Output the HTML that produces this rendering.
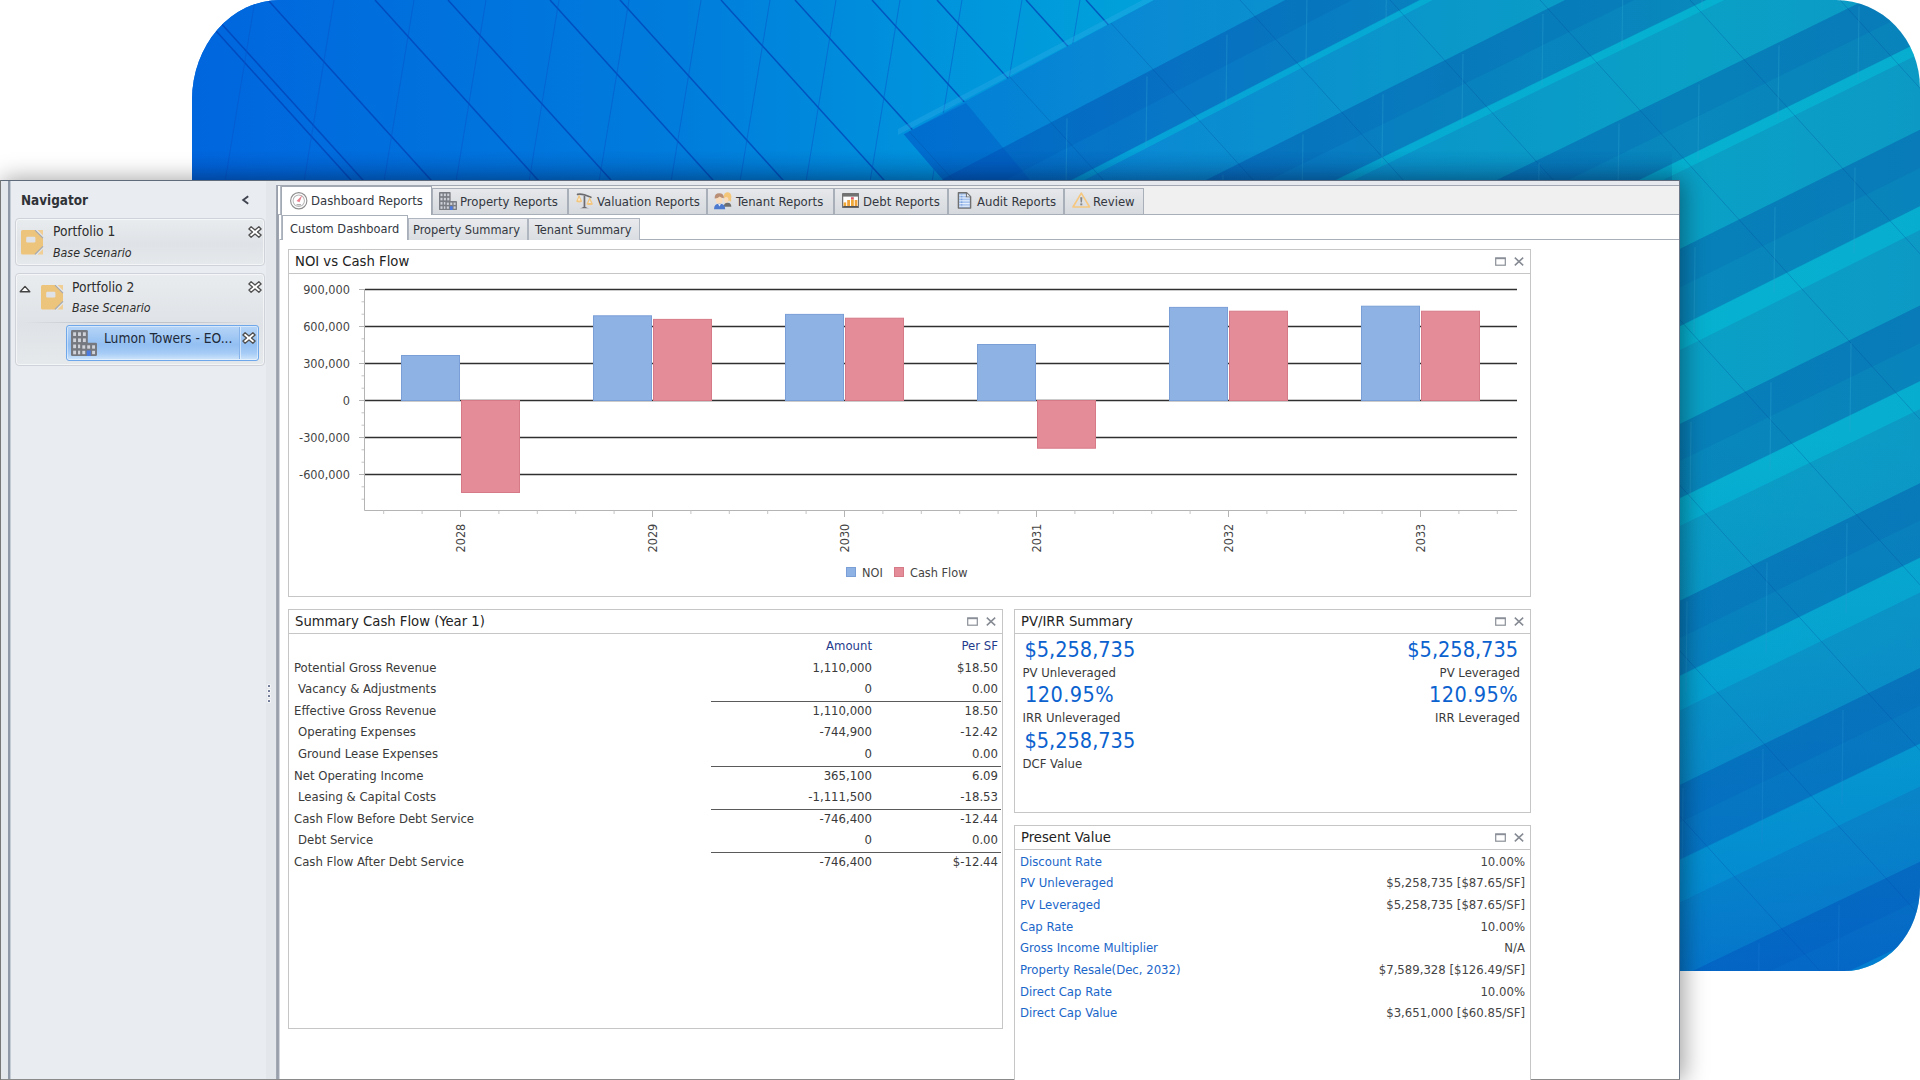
<!DOCTYPE html><html lang="en"><head><meta charset="utf-8"><title>Dashboard Reports</title><style>
*{box-sizing:border-box;margin:0;padding:0}
html,body{width:1920px;height:1080px;overflow:hidden;background:#fff}
body{position:relative;font-family:"DejaVu Sans Condensed","Liberation Sans",sans-serif;font-size:13px;color:#3a3a3a}
.a{position:absolute}
.t{position:absolute;white-space:nowrap;line-height:16px;height:16px}
#bg{position:absolute;left:192px;top:0;width:1728px;height:971px;overflow:hidden;border-radius:88px 84px 76px 0/100px 88px 84px 0}
#win{position:absolute;left:0;top:180px;width:1680px;height:900px;background:#fff;box-shadow:3px 0 22px 1px rgba(0,0,0,.37)}
.card{position:absolute;border:1px solid #cfd3d9;border-radius:4px;background:linear-gradient(#e9ecef,#dfe2e6 55%,#e6e9ec);box-shadow:inset 0 0 0 1px rgba(255,255,255,.55)}
.otab{position:absolute;top:188px;height:26px;border:1px solid #a9afb8;border-bottom:none;background:linear-gradient(#e6e8eb,#d6d9dd)}
.itab{position:absolute;top:218px;height:22px;border:1px solid #b0b6bf;border-bottom:none;background:linear-gradient(#e8eaed,#dadde1)}
.panel{position:absolute;border:1px solid #c6c6c6;background:#fff}
.ptitle{position:absolute;left:0;right:0;top:0;height:24px;border-bottom:1px solid #c6c6c6}
.ptitle span{position:absolute;left:6px;top:1px;font-size:14.7px;line-height:20px;color:#222;white-space:nowrap}
.r{text-align:right}
.blue{color:#1a66c9}
.big{position:absolute;white-space:nowrap;font-size:21.5px;line-height:26px;height:26px;color:#0b62cf}
</style></head><body>
<div id="bg"><svg width="1728" height="971" viewBox="192 0 1728 971" style="position:absolute;left:0;top:0">
<defs>
<linearGradient id="gbase" x1="192" y1="0" x2="1920" y2="0" gradientUnits="userSpaceOnUse">
<stop offset="0" stop-color="#0064dc"/><stop offset="0.41" stop-color="#007ed8"/><stop offset="0.554" stop-color="#0a8ad3"/><stop offset="0.728" stop-color="#0a98c9"/><stop offset="0.87" stop-color="#0aa0c6"/><stop offset="1" stop-color="#0c9ac5"/>
</linearGradient>
<linearGradient id="gvert" x1="0" y1="0" x2="0" y2="971" gradientUnits="userSpaceOnUse">
<stop offset="0" stop-color="#0048d2" stop-opacity="0"/><stop offset="0.45" stop-color="#0048d2" stop-opacity="0"/><stop offset="0.67" stop-color="#0048d2" stop-opacity="0.12"/><stop offset="0.93" stop-color="#0048d2" stop-opacity="0.38"/><stop offset="1" stop-color="#0048d2" stop-opacity="0.48"/>
</linearGradient>
<linearGradient id="gleft" x1="192" y1="0" x2="1150" y2="0" gradientUnits="userSpaceOnUse">
<stop offset="0" stop-color="#0066de"/><stop offset="0.5" stop-color="#007cdc"/><stop offset="0.78" stop-color="#0094dc"/><stop offset="1" stop-color="#00a2da"/>
</linearGradient>
</defs>
<rect x="192" y="0" width="1728" height="971" fill="url(#gbase)"/>
<clipPath id="cf"><polygon points="903.6,134.2 1154,0 1920,0 1920,971 1400,971 943,180"/></clipPath>
<clipPath id="cl"><polygon points="192,0 1154,0 903.6,134.2 943,180 192,185"/></clipPath>
<g clip-path="url(#cl)">
<rect x="192" y="0" width="1000" height="200" fill="url(#gleft)"/>
<line x1="188" y1="0" x2="369" y2="200" stroke="#0040b4" stroke-opacity="0.72" stroke-width="1.5"/>
<line x1="200" y1="0" x2="381" y2="200" stroke="#0040b4" stroke-opacity="0.72" stroke-width="1.5"/>
<line x1="268" y1="0" x2="449" y2="200" stroke="#0040b4" stroke-opacity="0.72" stroke-width="1.5"/>
<line x1="375" y1="0" x2="556" y2="200" stroke="#0040b4" stroke-opacity="0.72" stroke-width="1.5"/>
<line x1="448" y1="0" x2="629" y2="200" stroke="#0040b4" stroke-opacity="0.72" stroke-width="1.5"/>
<line x1="550" y1="0" x2="731" y2="200" stroke="#0040b4" stroke-opacity="0.72" stroke-width="1.5"/>
<line x1="620" y1="0" x2="801" y2="200" stroke="#0040b4" stroke-opacity="0.72" stroke-width="1.5"/>
<line x1="721" y1="0" x2="902" y2="200" stroke="#0040b4" stroke-opacity="0.72" stroke-width="1.5"/>
<line x1="795" y1="0" x2="976" y2="200" stroke="#0040b4" stroke-opacity="0.72" stroke-width="1.5"/>
<line x1="872" y1="0" x2="1053" y2="200" stroke="#0040b4" stroke-opacity="0.72" stroke-width="1.5"/>
<line x1="937" y1="0" x2="1118" y2="200" stroke="#0040b4" stroke-opacity="0.72" stroke-width="1.5"/>
<line x1="1026" y1="0" x2="1207" y2="200" stroke="#0040b4" stroke-opacity="0.72" stroke-width="1.5"/>
<line x1="1086" y1="0" x2="1267" y2="200" stroke="#0040b4" stroke-opacity="0.72" stroke-width="1.5"/>
<line x1="255" y1="0" x2="222" y2="200" stroke="#0a54c8" stroke-opacity="0.5" stroke-width="1"/>
<line x1="334" y1="0" x2="301" y2="200" stroke="#0a54c8" stroke-opacity="0.5" stroke-width="1"/>
<line x1="414" y1="0" x2="381" y2="200" stroke="#0a54c8" stroke-opacity="0.5" stroke-width="1"/>
<line x1="486" y1="0" x2="453" y2="200" stroke="#0a54c8" stroke-opacity="0.5" stroke-width="1"/>
<line x1="559" y1="0" x2="526" y2="200" stroke="#0a54c8" stroke-opacity="0.5" stroke-width="1"/>
<line x1="629" y1="0" x2="596" y2="200" stroke="#0a54c8" stroke-opacity="0.5" stroke-width="1"/>
<line x1="701" y1="0" x2="668" y2="200" stroke="#0a54c8" stroke-opacity="0.5" stroke-width="1"/>
<line x1="770" y1="0" x2="737" y2="200" stroke="#0a54c8" stroke-opacity="0.5" stroke-width="1"/>
<line x1="836" y1="0" x2="803" y2="200" stroke="#0a54c8" stroke-opacity="0.5" stroke-width="1"/>
<line x1="900" y1="0" x2="867" y2="200" stroke="#0a54c8" stroke-opacity="0.5" stroke-width="1"/>
<line x1="962" y1="0" x2="929" y2="200" stroke="#0a54c8" stroke-opacity="0.5" stroke-width="1"/>
<line x1="1022" y1="0" x2="989" y2="200" stroke="#0a54c8" stroke-opacity="0.5" stroke-width="1"/>
<line x1="1080" y1="0" x2="1047" y2="200" stroke="#0a54c8" stroke-opacity="0.5" stroke-width="1"/>
<polygon points="898.0,129.1 1154.0,-6.0 1154.0,0.0 898.0,135.1" fill="#38b0ec" fill-opacity="0.3"/>
</g>
<g clip-path="url(#cf)">
<polygon points="840.0,232.7 1920.0,-331.6 1920.0,-258.4 840.0,300.2" fill="#002896" fill-opacity="0.2"/>
<polygon points="840.0,232.7 1920.0,-331.6 1920.0,-295.3 840.0,266.1" fill="#002896" fill-opacity="0.08"/>
<polygon points="840.0,363.6 1920.0,-178.0 1920.0,-103.5 840.0,421.1" fill="#002896" fill-opacity="0.2"/>
<polygon points="840.0,363.6 1920.0,-178.0 1920.0,-141.1 840.0,392.0" fill="#002896" fill-opacity="0.08"/>
<polygon points="840.0,501.3 1920.0,-26.8 1920.0,42.1 840.0,573.6" fill="#002896" fill-opacity="0.2"/>
<polygon points="840.0,501.3 1920.0,-26.8 1920.0,7.4 840.0,537.2" fill="#002896" fill-opacity="0.08"/>
<polygon points="840.0,665.5 1920.0,129.8 1920.0,206.6 840.0,746.6" fill="#002896" fill-opacity="0.2"/>
<polygon points="840.0,665.5 1920.0,129.8 1920.0,167.9 840.0,705.8" fill="#002896" fill-opacity="0.08"/>
<polygon points="840.0,838.5 1920.0,305.5 1920.0,381.6 840.0,907.5" fill="#002896" fill-opacity="0.2"/>
<polygon points="840.0,838.5 1920.0,305.5 1920.0,343.2 840.0,872.7" fill="#002896" fill-opacity="0.08"/>
<polygon points="840.0,1011.5 1920.0,483.2 1920.0,558.1 840.0,1088.7" fill="#002896" fill-opacity="0.2"/>
<polygon points="840.0,1011.5 1920.0,483.2 1920.0,520.4 840.0,1049.8" fill="#002896" fill-opacity="0.08"/>
<polygon points="840.0,1193.9 1920.0,668.0 1920.0,744.1 840.0,1265.3" fill="#002896" fill-opacity="0.2"/>
<polygon points="840.0,1193.9 1920.0,668.0 1920.0,705.8 840.0,1229.3" fill="#002896" fill-opacity="0.08"/>
<polygon points="840.0,1380.6 1920.0,861.8 1920.0,937.6 840.0,1454.1" fill="#002896" fill-opacity="0.2"/>
<polygon points="840.0,1380.6 1920.0,861.8 1920.0,899.4 840.0,1417.1" fill="#002896" fill-opacity="0.08"/>
<polygon points="840.0,299.6 1920.0,-259.0 1920.0,-252.0 840.0,306.6" fill="#00d2e1" fill-opacity="0.35"/>
<polygon points="840.0,420.5 1920.0,-104.1 1920.0,-95.1 840.0,429.5" fill="#00d2e1" fill-opacity="0.35"/>
<polygon points="840.0,573.0 1920.0,41.5 1920.0,53.5 840.0,585.0" fill="#00d2e1" fill-opacity="0.35"/>
<polygon points="840.0,746.0 1920.0,206.0 1920.0,230.0 840.0,770.0" fill="#00d2e1" fill-opacity="0.35"/>
<polygon points="840.0,906.9 1920.0,381.0 1920.0,409.0 840.0,934.9" fill="#00d2e1" fill-opacity="0.35"/>
<polygon points="840.0,1088.1 1920.0,557.5 1920.0,592.5 840.0,1123.1" fill="#00d2e1" fill-opacity="0.35"/>
<polygon points="840.0,1264.7 1920.0,743.5 1920.0,786.5 840.0,1307.7" fill="#00d2e1" fill-opacity="0.35"/>
<polygon points="840.0,1453.5 1920.0,937.0 1920.0,987.0 840.0,1503.5" fill="#00d2e1" fill-opacity="0.35"/>
<polygon points="903.6,134.2 966.0,103.0 1034.0,185.0 943.0,185.0" fill="#0050c0" fill-opacity="0.35"/>
<line x1="640" y1="0" x2="1520" y2="971" stroke="#004a9c" stroke-opacity="0.28" stroke-width="1"/>
<line x1="790" y1="0" x2="1670" y2="971" stroke="#004a9c" stroke-opacity="0.28" stroke-width="1"/>
<line x1="940" y1="0" x2="1820" y2="971" stroke="#004a9c" stroke-opacity="0.28" stroke-width="1"/>
<line x1="1090" y1="0" x2="1970" y2="971" stroke="#004a9c" stroke-opacity="0.28" stroke-width="1"/>
<line x1="1240" y1="0" x2="2120" y2="971" stroke="#004a9c" stroke-opacity="0.28" stroke-width="1"/>
<line x1="1390" y1="0" x2="2270" y2="971" stroke="#004a9c" stroke-opacity="0.28" stroke-width="1"/>
<line x1="1540" y1="0" x2="2420" y2="971" stroke="#004a9c" stroke-opacity="0.28" stroke-width="1"/>
<line x1="1690" y1="0" x2="2570" y2="971" stroke="#004a9c" stroke-opacity="0.28" stroke-width="1"/>
<line x1="1840" y1="0" x2="2720" y2="971" stroke="#004a9c" stroke-opacity="0.28" stroke-width="1"/>
<line x1="1990" y1="0" x2="2870" y2="971" stroke="#004a9c" stroke-opacity="0.28" stroke-width="1"/>
<line x1="1867" y1="-299.7" x2="1866" y2="-225.6" stroke="#30a8d4" stroke-opacity="0.34" stroke-width="1.2"/>
<line x1="1787" y1="-257.9" x2="1786" y2="-184.2" stroke="#30a8d4" stroke-opacity="0.34" stroke-width="1.2"/>
<line x1="1707" y1="-216.1" x2="1706" y2="-142.8" stroke="#30a8d4" stroke-opacity="0.34" stroke-width="1.2"/>
<line x1="1627" y1="-174.3" x2="1626" y2="-101.4" stroke="#30a8d4" stroke-opacity="0.34" stroke-width="1.2"/>
<line x1="1547" y1="-132.5" x2="1546" y2="-60.1" stroke="#30a8d4" stroke-opacity="0.34" stroke-width="1.2"/>
<line x1="1467" y1="-90.7" x2="1466" y2="-18.7" stroke="#30a8d4" stroke-opacity="0.34" stroke-width="1.2"/>
<line x1="1387" y1="-48.9" x2="1386" y2="22.7" stroke="#30a8d4" stroke-opacity="0.34" stroke-width="1.2"/>
<line x1="1307" y1="-7.1" x2="1306" y2="64.1" stroke="#30a8d4" stroke-opacity="0.34" stroke-width="1.2"/>
<line x1="1227" y1="34.7" x2="1226" y2="105.4" stroke="#30a8d4" stroke-opacity="0.34" stroke-width="1.2"/>
<line x1="1147" y1="76.5" x2="1146" y2="146.8" stroke="#30a8d4" stroke-opacity="0.34" stroke-width="1.2"/>
<line x1="1067" y1="118.3" x2="1066" y2="188.2" stroke="#30a8d4" stroke-opacity="0.34" stroke-width="1.2"/>
<line x1="1863" y1="-146.5" x2="1862" y2="-69.4" stroke="#30a8d4" stroke-opacity="0.34" stroke-width="1.2"/>
<line x1="1783" y1="-106.3" x2="1782" y2="-30.5" stroke="#30a8d4" stroke-opacity="0.34" stroke-width="1.2"/>
<line x1="1703" y1="-66.2" x2="1702" y2="8.3" stroke="#30a8d4" stroke-opacity="0.34" stroke-width="1.2"/>
<line x1="1623" y1="-26.1" x2="1622" y2="47.2" stroke="#30a8d4" stroke-opacity="0.34" stroke-width="1.2"/>
<line x1="1543" y1="14.0" x2="1542" y2="86.0" stroke="#30a8d4" stroke-opacity="0.34" stroke-width="1.2"/>
<line x1="1463" y1="54.1" x2="1462" y2="124.9" stroke="#30a8d4" stroke-opacity="0.34" stroke-width="1.2"/>
<line x1="1383" y1="94.3" x2="1382" y2="163.7" stroke="#30a8d4" stroke-opacity="0.34" stroke-width="1.2"/>
<line x1="1303" y1="134.4" x2="1302" y2="202.6" stroke="#30a8d4" stroke-opacity="0.34" stroke-width="1.2"/>
<line x1="1223" y1="174.5" x2="1222" y2="241.5" stroke="#30a8d4" stroke-opacity="0.34" stroke-width="1.2"/>
<line x1="1143" y1="214.6" x2="1142" y2="280.3" stroke="#30a8d4" stroke-opacity="0.34" stroke-width="1.2"/>
<line x1="1063" y1="254.7" x2="1062" y2="319.2" stroke="#30a8d4" stroke-opacity="0.34" stroke-width="1.2"/>
<line x1="1859" y1="6.3" x2="1858" y2="80.0" stroke="#30a8d4" stroke-opacity="0.34" stroke-width="1.2"/>
<line x1="1779" y1="45.4" x2="1778" y2="119.4" stroke="#30a8d4" stroke-opacity="0.34" stroke-width="1.2"/>
<line x1="1699" y1="84.5" x2="1698" y2="158.8" stroke="#30a8d4" stroke-opacity="0.34" stroke-width="1.2"/>
<line x1="1619" y1="123.6" x2="1618" y2="198.1" stroke="#30a8d4" stroke-opacity="0.34" stroke-width="1.2"/>
<line x1="1539" y1="162.7" x2="1538" y2="237.5" stroke="#30a8d4" stroke-opacity="0.34" stroke-width="1.2"/>
<line x1="1459" y1="201.9" x2="1458" y2="276.9" stroke="#30a8d4" stroke-opacity="0.34" stroke-width="1.2"/>
<line x1="1379" y1="241.0" x2="1378" y2="316.3" stroke="#30a8d4" stroke-opacity="0.34" stroke-width="1.2"/>
<line x1="1299" y1="280.1" x2="1298" y2="355.6" stroke="#30a8d4" stroke-opacity="0.34" stroke-width="1.2"/>
<line x1="1219" y1="319.2" x2="1218" y2="395.0" stroke="#30a8d4" stroke-opacity="0.34" stroke-width="1.2"/>
<line x1="1139" y1="358.3" x2="1138" y2="434.4" stroke="#30a8d4" stroke-opacity="0.34" stroke-width="1.2"/>
<line x1="1059" y1="397.4" x2="1058" y2="473.8" stroke="#30a8d4" stroke-opacity="0.34" stroke-width="1.2"/>
<line x1="1855" y1="167.5" x2="1854" y2="253.0" stroke="#30a8d4" stroke-opacity="0.34" stroke-width="1.2"/>
<line x1="1775" y1="207.2" x2="1774" y2="293.0" stroke="#30a8d4" stroke-opacity="0.34" stroke-width="1.2"/>
<line x1="1695" y1="246.9" x2="1694" y2="333.0" stroke="#30a8d4" stroke-opacity="0.34" stroke-width="1.2"/>
<line x1="1615" y1="286.6" x2="1614" y2="373.0" stroke="#30a8d4" stroke-opacity="0.34" stroke-width="1.2"/>
<line x1="1535" y1="326.2" x2="1534" y2="413.0" stroke="#30a8d4" stroke-opacity="0.34" stroke-width="1.2"/>
<line x1="1455" y1="365.9" x2="1454" y2="453.0" stroke="#30a8d4" stroke-opacity="0.34" stroke-width="1.2"/>
<line x1="1375" y1="405.6" x2="1374" y2="493.0" stroke="#30a8d4" stroke-opacity="0.34" stroke-width="1.2"/>
<line x1="1295" y1="445.3" x2="1294" y2="533.0" stroke="#30a8d4" stroke-opacity="0.34" stroke-width="1.2"/>
<line x1="1215" y1="485.0" x2="1214" y2="573.0" stroke="#30a8d4" stroke-opacity="0.34" stroke-width="1.2"/>
<line x1="1135" y1="524.7" x2="1134" y2="613.0" stroke="#30a8d4" stroke-opacity="0.34" stroke-width="1.2"/>
<line x1="1055" y1="564.4" x2="1054" y2="653.0" stroke="#30a8d4" stroke-opacity="0.34" stroke-width="1.2"/>
<line x1="1851" y1="343.0" x2="1850" y2="431.1" stroke="#30a8d4" stroke-opacity="0.34" stroke-width="1.2"/>
<line x1="1771" y1="382.5" x2="1770" y2="470.0" stroke="#30a8d4" stroke-opacity="0.34" stroke-width="1.2"/>
<line x1="1691" y1="422.0" x2="1690" y2="509.0" stroke="#30a8d4" stroke-opacity="0.34" stroke-width="1.2"/>
<line x1="1611" y1="461.5" x2="1610" y2="548.0" stroke="#30a8d4" stroke-opacity="0.34" stroke-width="1.2"/>
<line x1="1531" y1="501.0" x2="1530" y2="586.9" stroke="#30a8d4" stroke-opacity="0.34" stroke-width="1.2"/>
<line x1="1451" y1="540.4" x2="1450" y2="625.9" stroke="#30a8d4" stroke-opacity="0.34" stroke-width="1.2"/>
<line x1="1371" y1="579.9" x2="1370" y2="664.8" stroke="#30a8d4" stroke-opacity="0.34" stroke-width="1.2"/>
<line x1="1291" y1="619.4" x2="1290" y2="703.8" stroke="#30a8d4" stroke-opacity="0.34" stroke-width="1.2"/>
<line x1="1211" y1="658.9" x2="1210" y2="742.7" stroke="#30a8d4" stroke-opacity="0.34" stroke-width="1.2"/>
<line x1="1131" y1="698.3" x2="1130" y2="781.7" stroke="#30a8d4" stroke-opacity="0.34" stroke-width="1.2"/>
<line x1="1051" y1="737.8" x2="1050" y2="820.7" stroke="#30a8d4" stroke-opacity="0.34" stroke-width="1.2"/>
<line x1="1847" y1="523.2" x2="1846" y2="613.4" stroke="#30a8d4" stroke-opacity="0.34" stroke-width="1.2"/>
<line x1="1767" y1="562.3" x2="1766" y2="652.7" stroke="#30a8d4" stroke-opacity="0.34" stroke-width="1.2"/>
<line x1="1687" y1="601.5" x2="1686" y2="692.0" stroke="#30a8d4" stroke-opacity="0.34" stroke-width="1.2"/>
<line x1="1607" y1="640.6" x2="1606" y2="731.3" stroke="#30a8d4" stroke-opacity="0.34" stroke-width="1.2"/>
<line x1="1527" y1="679.7" x2="1526" y2="770.6" stroke="#30a8d4" stroke-opacity="0.34" stroke-width="1.2"/>
<line x1="1447" y1="718.8" x2="1446" y2="809.9" stroke="#30a8d4" stroke-opacity="0.34" stroke-width="1.2"/>
<line x1="1367" y1="758.0" x2="1366" y2="849.2" stroke="#30a8d4" stroke-opacity="0.34" stroke-width="1.2"/>
<line x1="1287" y1="797.1" x2="1286" y2="888.5" stroke="#30a8d4" stroke-opacity="0.34" stroke-width="1.2"/>
<line x1="1207" y1="836.2" x2="1206" y2="927.8" stroke="#30a8d4" stroke-opacity="0.34" stroke-width="1.2"/>
<line x1="1127" y1="875.4" x2="1126" y2="967.1" stroke="#30a8d4" stroke-opacity="0.34" stroke-width="1.2"/>
<line x1="1047" y1="914.5" x2="1046" y2="1006.4" stroke="#30a8d4" stroke-opacity="0.34" stroke-width="1.2"/>
<line x1="1843" y1="710.0" x2="1842" y2="804.6" stroke="#30a8d4" stroke-opacity="0.34" stroke-width="1.2"/>
<line x1="1763" y1="748.9" x2="1762" y2="843.3" stroke="#30a8d4" stroke-opacity="0.34" stroke-width="1.2"/>
<line x1="1683" y1="787.9" x2="1682" y2="881.9" stroke="#30a8d4" stroke-opacity="0.34" stroke-width="1.2"/>
<line x1="1603" y1="826.9" x2="1602" y2="920.5" stroke="#30a8d4" stroke-opacity="0.34" stroke-width="1.2"/>
<line x1="1523" y1="865.8" x2="1522" y2="959.1" stroke="#30a8d4" stroke-opacity="0.34" stroke-width="1.2"/>
<line x1="1443" y1="904.8" x2="1442" y2="997.7" stroke="#30a8d4" stroke-opacity="0.34" stroke-width="1.2"/>
<line x1="1363" y1="943.7" x2="1362" y2="1036.3" stroke="#30a8d4" stroke-opacity="0.34" stroke-width="1.2"/>
<line x1="1283" y1="982.7" x2="1282" y2="1074.9" stroke="#30a8d4" stroke-opacity="0.34" stroke-width="1.2"/>
<line x1="1203" y1="1021.6" x2="1202" y2="1113.5" stroke="#30a8d4" stroke-opacity="0.34" stroke-width="1.2"/>
<line x1="1123" y1="1060.6" x2="1122" y2="1152.1" stroke="#30a8d4" stroke-opacity="0.34" stroke-width="1.2"/>
<line x1="1043" y1="1099.5" x2="1042" y2="1190.7" stroke="#30a8d4" stroke-opacity="0.34" stroke-width="1.2"/>
<line x1="1839" y1="904.9" x2="1838" y2="1003.2" stroke="#30a8d4" stroke-opacity="0.34" stroke-width="1.2"/>
<line x1="1759" y1="943.3" x2="1758" y2="1041.5" stroke="#30a8d4" stroke-opacity="0.34" stroke-width="1.2"/>
<line x1="1679" y1="981.8" x2="1678" y2="1079.7" stroke="#30a8d4" stroke-opacity="0.34" stroke-width="1.2"/>
<line x1="1599" y1="1020.2" x2="1598" y2="1118.0" stroke="#30a8d4" stroke-opacity="0.34" stroke-width="1.2"/>
<line x1="1519" y1="1058.6" x2="1518" y2="1156.3" stroke="#30a8d4" stroke-opacity="0.34" stroke-width="1.2"/>
<line x1="1439" y1="1097.1" x2="1438" y2="1194.5" stroke="#30a8d4" stroke-opacity="0.34" stroke-width="1.2"/>
<line x1="1359" y1="1135.5" x2="1358" y2="1232.8" stroke="#30a8d4" stroke-opacity="0.34" stroke-width="1.2"/>
<line x1="1279" y1="1173.9" x2="1278" y2="1271.0" stroke="#30a8d4" stroke-opacity="0.34" stroke-width="1.2"/>
<line x1="1199" y1="1212.4" x2="1198" y2="1309.3" stroke="#30a8d4" stroke-opacity="0.34" stroke-width="1.2"/>
<line x1="1119" y1="1250.8" x2="1118" y2="1347.6" stroke="#30a8d4" stroke-opacity="0.34" stroke-width="1.2"/>
<line x1="1039" y1="1289.2" x2="1038" y2="1385.8" stroke="#30a8d4" stroke-opacity="0.34" stroke-width="1.2"/>
</g>
<rect x="192" y="0" width="1728" height="971" fill="url(#gvert)"/>
<linearGradient id="gsh" x1="0" y1="150" x2="0" y2="181" gradientUnits="userSpaceOnUse"><stop offset="0" stop-color="#00308c" stop-opacity="0"/><stop offset="1" stop-color="#00308c" stop-opacity="0.22"/></linearGradient>
<rect x="192" y="150" width="1480" height="31" fill="url(#gsh)"/>
</svg></div>
<div id="win"></div>
<div class="a" style="left:0px;top:180px;width:1680px;height:1px;background:#5f6a7b"></div>
<div class="a" style="left:0px;top:181px;width:1680px;height:4px;background:#e6e9ed"></div>
<div class="a" style="left:1679px;top:180px;width:1px;height:900px;background:#6b7686"></div>
<div class="a" style="left:0px;top:1079px;width:1680px;height:1px;background:#8a8a8a"></div>
<div class="a" style="left:0px;top:180px;width:1px;height:900px;background:#777"></div>
<div class="a" style="left:1px;top:181px;width:7px;height:898px;background:#e4e7eb"></div>
<div class="a" style="left:8px;top:181px;width:2px;height:898px;background:#8f98a7"></div>
<div class="a" style="left:10px;top:181px;width:1px;height:898px;background:#c4cad3"></div>
<div class="a" style="left:11px;top:181px;width:255px;height:898px;background:#e9ecf0"></div>
<div class="a" style="left:266px;top:181px;width:10px;height:898px;background:#e3e7ec"></div>
<div class="a" style="left:267.7px;top:685.3px;width:2px;height:2px;background:#6b7494;border-radius:.5px;box-shadow:0 0 0 1px rgba(255,255,255,.55)"></div>
<div class="a" style="left:267.7px;top:690.1px;width:2px;height:2px;background:#6b7494;border-radius:.5px;box-shadow:0 0 0 1px rgba(255,255,255,.55)"></div>
<div class="a" style="left:267.7px;top:695.0px;width:2px;height:2px;background:#6b7494;border-radius:.5px;box-shadow:0 0 0 1px rgba(255,255,255,.55)"></div>
<div class="a" style="left:267.7px;top:699.8px;width:2px;height:2px;background:#6b7494;border-radius:.5px;box-shadow:0 0 0 1px rgba(255,255,255,.55)"></div>
<div class="a" style="left:276px;top:185px;width:3px;height:894px;background:linear-gradient(90deg,#a6adb7,#979eaa 60%,#a3aab5)"></div>
<div class="a" style="left:279px;top:185px;width:1px;height:894px;background:#d3d7dd"></div>
<div class="a" style="left:278px;top:185px;width:1401px;height:1px;background:#a2a9b3"></div>
<div class="a" style="left:278px;top:186px;width:1401px;height:28px;background:#f0f0f0"></div>
<div class="a" style="left:278px;top:214px;width:1401px;height:1px;background:#a9afb8"></div>
<div class="a" style="left:280px;top:215px;width:1399px;height:24px;background:#fff"></div>
<div class="a" style="left:280px;top:239px;width:1399px;height:1px;background:#a9afb8"></div>
<div class="a" style="left:280px;top:240px;width:1399px;height:839px;background:#fff"></div>
<div class="a" style="left:278px;top:186px;width:3px;height:28px;background:#fff;border-right:1px solid #b5bbc4"></div>
<div class="a" style="left:279px;top:215px;width:3px;height:24px;background:#fff;border-right:1px solid #b5bbc4"></div>
<div class="t" style="left:21px;top:192.5px;font-weight:bold;color:#2f3237;font-size:13.4px">Navigator</div>
<svg class="a" style="left:241px;top:195px" width="10" height="10" viewBox="0 0 10 10" ><path d="M7.2 1.2L2.2 5L7.2 8.8" fill="none" stroke="#3f4350" stroke-width="1.9" stroke-linejoin="miter"/></svg>
<div class="card" style="left:15px;top:218px;width:250px;height:48px"></div>
<svg class="a" style="left:21px;top:230px" width="22.5" height="24.5" viewBox="0 0 22.5 24.5" ><path d="M1.5 0H14L22 8V16.5L14 24.5H1.5Q0 24.5 0 23V1.5Q0 0 1.5 0Z" fill="#edc47c"/><path d="M16.5 0H22V5.5Z" fill="#f1cf94"/><path d="M16.5 24.5H22V19Z" fill="#f1cf94"/><path d="M14 0.2L22 8.2" stroke="#a3a8b0" stroke-width="1.2"/><path d="M14 24.3L22 16.3" stroke="#a3a8b0" stroke-width="1.2"/><rect x="5.2" y="6.8" width="9.2" height="5.6" rx="1.2" fill="#dfe3e8"/></svg>
<div class="t" style="left:53px;top:223px;color:#2d2d2d;font-size:13.7px">Portfolio 1</div>
<div class="t" style="left:53px;top:244.7px;font-style:italic;color:#2d2d2d;font-size:12.3px">Base Scenario</div>
<svg class="a" style="left:248px;top:226px" width="14" height="12" viewBox="0 0 14 12" ><path d="M0.9 2.9L3.1 0.8L7 4L10.9 0.8L13.1 2.9L9.5 6L13.1 9.1L10.9 11.2L7 8L3.1 11.2L0.9 9.1L4.5 6Z" fill="#fff" stroke="#505050" stroke-width="1.35" stroke-linejoin="round"/></svg>
<div class="card" style="left:15px;top:273px;width:250px;height:93px"></div>
<div class="a" style="left:22px;top:322px;width:236px;height:1px;background:linear-gradient(90deg,rgba(190,195,202,0),#bfc4cb 30%,#bfc4cb 70%,rgba(190,195,202,0))"></div>
<svg class="a" style="left:19px;top:285px" width="12" height="8" viewBox="0 0 12 8" ><path d="M1.2 6.8L6 1.4L10.8 6.8Z" fill="#fff" stroke="#444" stroke-width="1.4" stroke-linejoin="round"/></svg>
<svg class="a" style="left:41px;top:285px" width="22.5" height="24.5" viewBox="0 0 22.5 24.5" ><path d="M1.5 0H14L22 8V16.5L14 24.5H1.5Q0 24.5 0 23V1.5Q0 0 1.5 0Z" fill="#edc47c"/><path d="M16.5 0H22V5.5Z" fill="#f1cf94"/><path d="M16.5 24.5H22V19Z" fill="#f1cf94"/><path d="M14 0.2L22 8.2" stroke="#a3a8b0" stroke-width="1.2"/><path d="M14 24.3L22 16.3" stroke="#a3a8b0" stroke-width="1.2"/><rect x="5.2" y="6.8" width="9.2" height="5.6" rx="1.2" fill="#dfe3e8"/></svg>
<div class="t" style="left:72px;top:279px;color:#2d2d2d;font-size:13.7px">Portfolio 2</div>
<div class="t" style="left:72px;top:299.7px;font-style:italic;color:#2d2d2d;font-size:12.3px">Base Scenario</div>
<svg class="a" style="left:248px;top:281px" width="14" height="12" viewBox="0 0 14 12" ><path d="M0.9 2.9L3.1 0.8L7 4L10.9 0.8L13.1 2.9L9.5 6L13.1 9.1L10.9 11.2L7 8L3.1 11.2L0.9 9.1L4.5 6Z" fill="#fff" stroke="#505050" stroke-width="1.35" stroke-linejoin="round"/></svg>
<div class="a" style="left:66px;top:325px;width:193px;height:36px;border:1px solid #6ea7ea;border-radius:3px;background:linear-gradient(#b6d5f7,#93bff2 55%,#a6ccf6 80%,#cfe5fb);box-shadow:inset 0 0 0 1px rgba(255,255,255,.45)"></div>
<div class="a" style="left:239px;top:327px;width:1px;height:32px;background:#86b4ea"></div>
<div class="a" style="left:240px;top:327px;width:1px;height:32px;background:rgba(255,255,255,.5)"></div>
<svg class="a" style="left:71px;top:330px" width="26" height="26" viewBox="0 0 17 17" ><rect x="0" y="0" width="11" height="17" rx="0.8" fill="#76787f"/><rect x="1.4" y="1.5" width="1.9" height="2.4" fill="#cfd3d9"/><rect x="4.6" y="1.5" width="1.9" height="2.4" fill="#cfd3d9"/><rect x="7.800000000000001" y="1.5" width="1.9" height="2.4" fill="#cfd3d9"/><rect x="1.4" y="5.5" width="1.9" height="2.4" fill="#cfd3d9"/><rect x="4.6" y="5.5" width="1.9" height="2.4" fill="#cfd3d9"/><rect x="7.800000000000001" y="5.5" width="1.9" height="2.4" fill="#cfd3d9"/><rect x="1.4" y="9.5" width="1.9" height="2.4" fill="#cfd3d9"/><rect x="4.6" y="9.5" width="1.9" height="2.4" fill="#cfd3d9"/><rect x="7.800000000000001" y="9.5" width="1.9" height="2.4" fill="#cfd3d9"/><rect x="1.4" y="13.5" width="1.9" height="2.4" fill="#cfd3d9"/><rect x="4.6" y="13.5" width="1.9" height="2.4" fill="#cfd3d9"/><rect x="7.800000000000001" y="13.5" width="1.9" height="2.4" fill="#cfd3d9"/><rect x="6" y="8.4" width="11" height="8.6" rx="0.8" fill="#76787f"/><rect x="7.4" y="10.0" width="1.9" height="2.2" fill="#cfd3d9"/><rect x="10.600000000000001" y="10.0" width="1.9" height="2.2" fill="#cfd3d9"/><rect x="13.8" y="10.0" width="1.9" height="2.2" fill="#cfd3d9"/><rect x="7.4" y="13.6" width="1.9" height="2.2" fill="#cfd3d9"/><rect x="13.8" y="13.6" width="1.9" height="2.2" fill="#cfd3d9"/><rect x="10.3" y="13.4" width="2.6" height="3.6" fill="#4b7be0"/></svg>
<div class="t" style="left:104px;top:330px;color:#1e2a3a;font-size:13.7px">Lumon Towers - EO...</div>
<svg class="a" style="left:242px;top:332px" width="14" height="12" viewBox="0 0 14 12" ><path d="M0.9 2.9L3.1 0.8L7 4L10.9 0.8L13.1 2.9L9.5 6L13.1 9.1L10.9 11.2L7 8L3.1 11.2L0.9 9.1L4.5 6Z" fill="#fff" stroke="#505050" stroke-width="1.35" stroke-linejoin="round"/></svg>
<div class="a" style="left:281px;top:186px;width:151px;height:29px;background:#fff;border:1px solid #a2a9b3;border-bottom:none"></div>
<div class="otab" style="left:432px;width:136px"></div>
<div class="otab" style="left:568px;width:139px"></div>
<div class="otab" style="left:707px;width:127px"></div>
<div class="otab" style="left:834px;width:114px"></div>
<div class="otab" style="left:948px;width:116px"></div>
<div class="otab" style="left:1064px;width:80px"></div>
<svg class="a" style="left:290px;top:192px" width="17.5" height="17.5" viewBox="0 0 17.2 17.2" ><circle cx="8.6" cy="8.6" r="8" fill="#fff" stroke="#8e8e8e" stroke-width="1.1"/><circle cx="8.6" cy="8.6" r="5.6" fill="none" stroke="#b5b5b5" stroke-width="1"/><path d="M12 3.2L9.4 10L6.4 8.8Z" fill="#ea7f8c"/><path d="M6.4 12.6H10.8" stroke="#8e8e8e" stroke-width="1"/></svg>
<div class="t" style="left:311px;top:193px;color:#33373f">Dashboard Reports</div>
<div class="t" style="left:460px;top:194px;color:#33373f">Property Reports</div>
<div class="t" style="left:597px;top:194px;color:#33373f">Valuation Reports</div>
<div class="t" style="left:736px;top:194px;color:#33373f">Tenant Reports</div>
<div class="t" style="left:863px;top:194px;color:#33373f">Debt Reports</div>
<div class="t" style="left:977px;top:194px;color:#33373f">Audit Reports</div>
<div class="t" style="left:1093px;top:194px;color:#33373f">Review</div>
<svg class="a" style="left:439px;top:192px" width="18" height="18" viewBox="0 0 17 17" ><rect x="0" y="0" width="11" height="17" rx="0.8" fill="#7b7d84"/><rect x="1.4" y="1.5" width="1.9" height="2.4" fill="#cfd3d9"/><rect x="4.6" y="1.5" width="1.9" height="2.4" fill="#cfd3d9"/><rect x="7.800000000000001" y="1.5" width="1.9" height="2.4" fill="#cfd3d9"/><rect x="1.4" y="5.5" width="1.9" height="2.4" fill="#cfd3d9"/><rect x="4.6" y="5.5" width="1.9" height="2.4" fill="#cfd3d9"/><rect x="7.800000000000001" y="5.5" width="1.9" height="2.4" fill="#cfd3d9"/><rect x="1.4" y="9.5" width="1.9" height="2.4" fill="#cfd3d9"/><rect x="4.6" y="9.5" width="1.9" height="2.4" fill="#cfd3d9"/><rect x="7.800000000000001" y="9.5" width="1.9" height="2.4" fill="#cfd3d9"/><rect x="1.4" y="13.5" width="1.9" height="2.4" fill="#cfd3d9"/><rect x="4.6" y="13.5" width="1.9" height="2.4" fill="#cfd3d9"/><rect x="7.800000000000001" y="13.5" width="1.9" height="2.4" fill="#cfd3d9"/><rect x="6" y="8.4" width="11" height="8.6" rx="0.8" fill="#7b7d84"/><rect x="7.4" y="10.0" width="1.9" height="2.2" fill="#cfd3d9"/><rect x="10.600000000000001" y="10.0" width="1.9" height="2.2" fill="#cfd3d9"/><rect x="13.8" y="10.0" width="1.9" height="2.2" fill="#cfd3d9"/><rect x="7.4" y="13.6" width="1.9" height="2.2" fill="#cfd3d9"/><rect x="13.8" y="13.6" width="1.9" height="2.2" fill="#cfd3d9"/><rect x="10.3" y="13.4" width="2.6" height="3.6" fill="#4b7be0"/></svg>
<svg class="a" style="left:576px;top:192px" width="17" height="17" viewBox="0 0 17 17" ><path d="M1.6 2.4Q4 1.6 8.4 2.8L14.9 5.3" fill="none" stroke="#6c6c70" stroke-width="1.7" stroke-linecap="round"/><rect x="7.6" y="3.6" width="1.7" height="10.8" fill="#6c6c70"/><path d="M3.4 16.2Q7.6 15.8 8.45 13.2Q9.3 15.8 13.4 16.2Z" fill="#6c6c70"/><path d="M3.1 2.6L0.1 9.6Q3.1 11.4 6.2 9.6Z" fill="#f4c77e"/><path d="M3.1 5.6L1.9 8.6H4.3Z" fill="#fdf0da"/><path d="M13.7 4.9L10.4 12.2Q13.7 14 17 12.2Z" fill="#f4c77e"/><path d="M13.7 7.9L12.4 11H15Z" fill="#e6e9ee"/></svg>
<svg class="a" style="left:714px;top:192px" width="17.5" height="17.5" viewBox="0 0 17.2 17.2" ><ellipse cx="13.3" cy="4.6" rx="3.8" ry="4.4" fill="#f3c67a"/><path d="M14.5 4Q17.4 5 16.8 9.6Q15.2 9.4 14.6 7.4Z" fill="#f3c67a"/><ellipse cx="12" cy="7.8" rx="2.2" ry="2.8" fill="#f7dcc0"/><path d="M9.6 14.6Q9.6 10.6 13.4 10.6Q17 10.6 17 14.6Z" fill="#6f6f6f"/><ellipse cx="5.2" cy="8" rx="3.3" ry="3.6" fill="#f8dcbc"/><path d="M0.6 6.4Q0.4 1.2 5.2 1.2Q9.8 1.2 9.7 6.2Q7.4 6.2 5.6 4.4Q3.6 6.6 0.6 6.4Z" fill="#b98f78"/><path d="M0 17Q0 11.6 5.4 11.6Q11 11.6 11 17Z" fill="#4d79cf"/><path d="M4 11.7L5.4 14.2L6.8 11.7Z" fill="#dfe9f8"/></svg>
<svg class="a" style="left:842px;top:193px" width="17.2" height="15.2" viewBox="0 0 17.2 15.2" ><rect x="0.6" y="0.6" width="16" height="14" rx="0.8" fill="#fff" stroke="#727272" stroke-width="1.3"/><rect x="0.6" y="0.6" width="16" height="3" fill="#727272"/><rect x="1.6" y="9.4" width="2.6" height="4" fill="#f0a836"/><rect x="5.2" y="7" width="2.8" height="6.4" fill="#eea23a"/><rect x="9" y="4.2" width="2.8" height="2.4" fill="#e05a6a"/><rect x="9" y="6.6" width="2.8" height="6.8" fill="#f0a836"/><rect x="12.7" y="7" width="2.7" height="6.4" fill="#eea23a"/><rect x="1.2" y="13" width="14.8" height="1.3" fill="#555"/></svg>
<svg class="a" style="left:957px;top:192px" width="15" height="17" viewBox="0 0 15 17" ><path d="M1.4 0.7H9.6L13.6 4.7V16.1H1.4Z" fill="#a9c5ef" stroke="#707070" stroke-width="1.4" stroke-linejoin="round"/><path d="M9.4 0.9V5H13.4" fill="#e8eef8" stroke="#707070" stroke-width="1.1"/><rect x="3.8" y="2.2" width="1.6" height="13" fill="#7da4e2"/><path d="M2.3 3.2H9M2.3 6H12.6M2.3 8.8H12.6M2.3 11.6H12.6M2.3 14.2H12.6" stroke="#f4f8ff" stroke-width="0.9"/></svg>
<svg class="a" style="left:1072px;top:192px" width="18.6" height="16.5" viewBox="0 0 18.6 16.5" ><path d="M9.3 1.2L17.6 15H1Z" fill="none" stroke="#f6c77f" stroke-width="1.6" stroke-linejoin="round"/><path d="M8.2 5.2H10.4L9.9 10.4H8.7Z" fill="#858585"/><rect x="8.3" y="11.4" width="2" height="1.9" fill="#858585"/></svg>
<div class="a" style="left:282px;top:215px;width:126px;height:25px;background:#fff;border:1px solid #a9afb8;border-bottom:none"></div>
<div class="itab" style="left:408px;width:120px"></div>
<div class="itab" style="left:528px;width:112px"></div>
<div class="t" style="left:290px;top:220.7px;color:#33373f;font-size:12.7px">Custom Dashboard</div>
<div class="t" style="left:413px;top:222px;color:#33373f;font-size:12.7px">Property Summary</div>
<div class="t" style="left:535px;top:222px;color:#33373f;font-size:12.7px">Tenant Summary</div>
<div class="panel" style="left:288px;top:249px;width:1243px;height:348px"><div class="ptitle"><span>NOI vs Cash Flow</span><svg class="a" style="left:1206px;top:7px" width="11" height="9" viewBox="0 0 11 9"><rect x="0.7" y="1.2" width="9.6" height="7" fill="none" stroke="#8a8f98" stroke-width="1.2"/><rect x="0.2" y="0.4" width="10.6" height="1.8" fill="#8a8f98"/></svg><svg class="a" style="left:1225px;top:7px" width="10" height="9" viewBox="0 0 10 9"><path d="M0.8 0.6L9.2 8.4M9.2 0.6L0.8 8.4" stroke="#858a93" stroke-width="1.5"/></svg></div></div>
<svg class="a" style="left:289px;top:274px;font-family:'DejaVu Sans Condensed','Liberation Sans',sans-serif" width="1241" height="322" viewBox="289 274 1241 322" font-size="12.6" fill="#444">
<path d="M364.5 289V510.5H1517" fill="none" stroke="#b4b4b4" stroke-width="1"/>
<path d="M361.5 499.2H364" stroke="#c4c4c4"/>
<path d="M361.5 486.8H364" stroke="#c4c4c4"/>
<path d="M359 474.5H364" stroke="#b4b4b4"/>
<path d="M361.5 462.2H364" stroke="#c4c4c4"/>
<path d="M361.5 449.8H364" stroke="#c4c4c4"/>
<path d="M359 437.5H364" stroke="#b4b4b4"/>
<path d="M361.5 425.2H364" stroke="#c4c4c4"/>
<path d="M361.5 412.8H364" stroke="#c4c4c4"/>
<path d="M359 400.5H364" stroke="#b4b4b4"/>
<path d="M361.5 388.2H364" stroke="#c4c4c4"/>
<path d="M361.5 375.8H364" stroke="#c4c4c4"/>
<path d="M359 363.5H364" stroke="#b4b4b4"/>
<path d="M361.5 351.2H364" stroke="#c4c4c4"/>
<path d="M361.5 338.8H364" stroke="#c4c4c4"/>
<path d="M359 326.5H364" stroke="#b4b4b4"/>
<path d="M361.5 314.2H364" stroke="#c4c4c4"/>
<path d="M361.5 301.8H364" stroke="#c4c4c4"/>
<path d="M359 289.5H364" stroke="#b4b4b4"/>
<path d="M365 289.5H1517" stroke="#303030" stroke-width="1.4"/>
<text x="350" y="294.0" text-anchor="end">900,000</text>
<path d="M365 326.5H1517" stroke="#303030" stroke-width="1.4"/>
<text x="350" y="331.0" text-anchor="end">600,000</text>
<path d="M365 363.5H1517" stroke="#303030" stroke-width="1.4"/>
<text x="350" y="368.0" text-anchor="end">300,000</text>
<path d="M365 400.5H1517" stroke="#303030" stroke-width="1.4"/>
<text x="350" y="405.0" text-anchor="end">0</text>
<path d="M365 437.5H1517" stroke="#303030" stroke-width="1.4"/>
<text x="350" y="442.0" text-anchor="end">-300,000</text>
<path d="M365 474.5H1517" stroke="#303030" stroke-width="1.4"/>
<text x="350" y="479.0" text-anchor="end">-600,000</text>
<rect x="401.5" y="355.5" width="58" height="45.0" fill="#8fb2e5" stroke="#7a9fd6" stroke-width="1"/>
<rect x="461.5" y="400.5" width="58" height="92.0" fill="#e48c98" stroke="#d67a88" stroke-width="1"/>
<path d="M460.5 510.5V517" stroke="#b4b4b4"/>
<text transform="translate(464.5,552.5) rotate(-90)" x="0" y="0">2028</text>
<rect x="593.5" y="315.8" width="58" height="84.7" fill="#8fb2e5" stroke="#7a9fd6" stroke-width="1"/>
<rect x="653.5" y="319.4" width="58" height="81.1" fill="#e48c98" stroke="#d67a88" stroke-width="1"/>
<path d="M652.5 510.5V517" stroke="#b4b4b4"/>
<text transform="translate(656.5,552.5) rotate(-90)" x="0" y="0">2029</text>
<rect x="785.5" y="314.4" width="58" height="86.1" fill="#8fb2e5" stroke="#7a9fd6" stroke-width="1"/>
<rect x="845.5" y="318.2" width="58" height="82.3" fill="#e48c98" stroke="#d67a88" stroke-width="1"/>
<path d="M844.5 510.5V517" stroke="#b4b4b4"/>
<text transform="translate(848.5,552.5) rotate(-90)" x="0" y="0">2030</text>
<rect x="977.5" y="344.5" width="58" height="56.0" fill="#8fb2e5" stroke="#7a9fd6" stroke-width="1"/>
<rect x="1037.5" y="400.5" width="58" height="47.7" fill="#e48c98" stroke="#d67a88" stroke-width="1"/>
<path d="M1036.5 510.5V517" stroke="#b4b4b4"/>
<text transform="translate(1040.5,552.5) rotate(-90)" x="0" y="0">2031</text>
<rect x="1169.5" y="307.4" width="58" height="93.1" fill="#8fb2e5" stroke="#7a9fd6" stroke-width="1"/>
<rect x="1229.5" y="311.2" width="58" height="89.3" fill="#e48c98" stroke="#d67a88" stroke-width="1"/>
<path d="M1228.5 510.5V517" stroke="#b4b4b4"/>
<text transform="translate(1232.5,552.5) rotate(-90)" x="0" y="0">2032</text>
<rect x="1361.5" y="306.2" width="58" height="94.3" fill="#8fb2e5" stroke="#7a9fd6" stroke-width="1"/>
<rect x="1421.5" y="311.2" width="58" height="89.3" fill="#e48c98" stroke="#d67a88" stroke-width="1"/>
<path d="M1420.5 510.5V517" stroke="#b4b4b4"/>
<text transform="translate(1424.5,552.5) rotate(-90)" x="0" y="0">2033</text>
<path d="M383.7 510.5V514" stroke="#c4c4c4"/>
<path d="M422.1 510.5V514" stroke="#c4c4c4"/>
<path d="M498.9 510.5V514" stroke="#c4c4c4"/>
<path d="M537.3 510.5V514" stroke="#c4c4c4"/>
<path d="M575.7 510.5V514" stroke="#c4c4c4"/>
<path d="M614.1 510.5V514" stroke="#c4c4c4"/>
<path d="M690.9 510.5V514" stroke="#c4c4c4"/>
<path d="M729.3 510.5V514" stroke="#c4c4c4"/>
<path d="M767.7 510.5V514" stroke="#c4c4c4"/>
<path d="M806.1 510.5V514" stroke="#c4c4c4"/>
<path d="M882.9 510.5V514" stroke="#c4c4c4"/>
<path d="M921.3 510.5V514" stroke="#c4c4c4"/>
<path d="M959.7 510.5V514" stroke="#c4c4c4"/>
<path d="M998.1 510.5V514" stroke="#c4c4c4"/>
<path d="M1074.9 510.5V514" stroke="#c4c4c4"/>
<path d="M1113.3 510.5V514" stroke="#c4c4c4"/>
<path d="M1151.7 510.5V514" stroke="#c4c4c4"/>
<path d="M1190.1 510.5V514" stroke="#c4c4c4"/>
<path d="M1266.9 510.5V514" stroke="#c4c4c4"/>
<path d="M1305.3 510.5V514" stroke="#c4c4c4"/>
<path d="M1343.7 510.5V514" stroke="#c4c4c4"/>
<path d="M1382.1 510.5V514" stroke="#c4c4c4"/>
<path d="M1458.9 510.5V514" stroke="#c4c4c4"/>
<path d="M1497.3 510.5V514" stroke="#c4c4c4"/>
<rect x="846.5" y="567.5" width="9" height="9" fill="#8fb2e5" stroke="#7a9fd6"/>
<text x="862" y="577" >NOI</text>
<rect x="894.5" y="567.5" width="9" height="9" fill="#e48c98" stroke="#d67a88"/>
<text x="910" y="577">Cash Flow</text>
</svg>
<div class="panel" style="left:288px;top:609px;width:715px;height:420px"><div class="ptitle"><span>Summary Cash Flow (Year 1)</span><svg class="a" style="left:678px;top:7px" width="11" height="9" viewBox="0 0 11 9"><rect x="0.7" y="1.2" width="9.6" height="7" fill="none" stroke="#8a8f98" stroke-width="1.2"/><rect x="0.2" y="0.4" width="10.6" height="1.8" fill="#8a8f98"/></svg><svg class="a" style="left:697px;top:7px" width="10" height="9" viewBox="0 0 10 9"><path d="M0.8 0.6L9.2 8.4M9.2 0.6L0.8 8.4" stroke="#858a93" stroke-width="1.5"/></svg></div></div>
<div class="t r" style="left:772px;width:100px;top:638px;color:#1f3b8c">Amount</div>
<div class="t r" style="left:898px;width:100px;top:638px;color:#1f3b8c">Per SF</div>
<div class="t" style="left:294px;top:659.5px">Potential Gross Revenue</div>
<div class="t r" style="left:772px;width:100px;top:659.5px">1,110,000</div>
<div class="t r" style="left:898px;width:100px;top:659.5px">$18.50</div>
<div class="t" style="left:298px;top:681.1px">Vacancy &amp; Adjustments</div>
<div class="t r" style="left:772px;width:100px;top:681.1px">0</div>
<div class="t r" style="left:898px;width:100px;top:681.1px">0.00</div>
<div class="t" style="left:294px;top:702.7px">Effective Gross Revenue</div>
<div class="t r" style="left:772px;width:100px;top:702.7px">1,110,000</div>
<div class="t r" style="left:898px;width:100px;top:702.7px">18.50</div>
<div class="t" style="left:298px;top:724.3px">Operating Expenses</div>
<div class="t r" style="left:772px;width:100px;top:724.3px">-744,900</div>
<div class="t r" style="left:898px;width:100px;top:724.3px">-12.42</div>
<div class="t" style="left:298px;top:745.9px">Ground Lease Expenses</div>
<div class="t r" style="left:772px;width:100px;top:745.9px">0</div>
<div class="t r" style="left:898px;width:100px;top:745.9px">0.00</div>
<div class="t" style="left:294px;top:767.5px">Net Operating Income</div>
<div class="t r" style="left:772px;width:100px;top:767.5px">365,100</div>
<div class="t r" style="left:898px;width:100px;top:767.5px">6.09</div>
<div class="t" style="left:298px;top:789.1px">Leasing &amp; Capital Costs</div>
<div class="t r" style="left:772px;width:100px;top:789.1px">-1,111,500</div>
<div class="t r" style="left:898px;width:100px;top:789.1px">-18.53</div>
<div class="t" style="left:294px;top:810.7px">Cash Flow Before Debt Service</div>
<div class="t r" style="left:772px;width:100px;top:810.7px">-746,400</div>
<div class="t r" style="left:898px;width:100px;top:810.7px">-12.44</div>
<div class="t" style="left:298px;top:832.3px">Debt Service</div>
<div class="t r" style="left:772px;width:100px;top:832.3px">0</div>
<div class="t r" style="left:898px;width:100px;top:832.3px">0.00</div>
<div class="t" style="left:294px;top:853.9px">Cash Flow After Debt Service</div>
<div class="t r" style="left:772px;width:100px;top:853.9px">-746,400</div>
<div class="t r" style="left:898px;width:100px;top:853.9px">$-12.44</div>
<div class="a" style="left:710.5px;top:701px;width:290.5px;height:1.3px;background:#5a5a5a"></div>
<div class="a" style="left:710.5px;top:765.5px;width:290.5px;height:1.3px;background:#5a5a5a"></div>
<div class="a" style="left:710.5px;top:809px;width:290.5px;height:1.3px;background:#5a5a5a"></div>
<div class="a" style="left:710.5px;top:852px;width:290.5px;height:1.3px;background:#5a5a5a"></div>
<div class="panel" style="left:1014px;top:609px;width:517px;height:204px"><div class="ptitle"><span>PV/IRR Summary</span><svg class="a" style="left:480px;top:7px" width="11" height="9" viewBox="0 0 11 9"><rect x="0.7" y="1.2" width="9.6" height="7" fill="none" stroke="#8a8f98" stroke-width="1.2"/><rect x="0.2" y="0.4" width="10.6" height="1.8" fill="#8a8f98"/></svg><svg class="a" style="left:499px;top:7px" width="10" height="9" viewBox="0 0 10 9"><path d="M0.8 0.6L9.2 8.4M9.2 0.6L0.8 8.4" stroke="#858a93" stroke-width="1.5"/></svg></div></div>
<div class="big" style="left:1024.5px;top:636.5px">$5,258,735</div>
<div class="t" style="left:1022.5px;top:664.5px">PV Unleveraged</div>
<div class="big" style="left:1025px;top:682px"><span style="letter-spacing:.42px">120.95%</span></div>
<div class="t" style="left:1022.5px;top:709.5px">IRR Unleveraged</div>
<div class="big" style="left:1024.5px;top:727.5px">$5,258,735</div>
<div class="t" style="left:1022.5px;top:755.5px">DCF Value</div>
<div class="big r" style="left:1318px;width:200px;top:636.5px">$5,258,735</div>
<div class="t r" style="left:1320px;width:200px;top:664.5px">PV Leveraged</div>
<div class="big r" style="left:1318px;width:200px;top:682px"><span style="letter-spacing:.42px">120.95%</span></div>
<div class="t r" style="left:1320px;width:200px;top:709.5px">IRR Leveraged</div>
<div class="panel" style="left:1014px;top:825px;width:517px;height:270px"><div class="ptitle"><span>Present Value</span><svg class="a" style="left:480px;top:7px" width="11" height="9" viewBox="0 0 11 9"><rect x="0.7" y="1.2" width="9.6" height="7" fill="none" stroke="#8a8f98" stroke-width="1.2"/><rect x="0.2" y="0.4" width="10.6" height="1.8" fill="#8a8f98"/></svg><svg class="a" style="left:499px;top:7px" width="10" height="9" viewBox="0 0 10 9"><path d="M0.8 0.6L9.2 8.4M9.2 0.6L0.8 8.4" stroke="#858a93" stroke-width="1.5"/></svg></div></div>
<div class="t blue" style="left:1020px;top:853.8px">Discount Rate</div>
<div class="t r" style="left:1225px;width:300px;top:853.8px;color:#444">10.00%</div>
<div class="t blue" style="left:1020px;top:875.4px">PV Unleveraged</div>
<div class="t r" style="left:1225px;width:300px;top:875.4px;color:#444">$5,258,735 [$87.65/SF]</div>
<div class="t blue" style="left:1020px;top:897.1px">PV Leveraged</div>
<div class="t r" style="left:1225px;width:300px;top:897.1px;color:#444">$5,258,735 [$87.65/SF]</div>
<div class="t blue" style="left:1020px;top:918.7px">Cap Rate</div>
<div class="t r" style="left:1225px;width:300px;top:918.7px;color:#444">10.00%</div>
<div class="t blue" style="left:1020px;top:940.4px">Gross Income Multiplier</div>
<div class="t r" style="left:1225px;width:300px;top:940.4px;color:#444">N/A</div>
<div class="t blue" style="left:1020px;top:962.0px">Property Resale(Dec, 2032)</div>
<div class="t r" style="left:1225px;width:300px;top:962.0px;color:#444">$7,589,328 [$126.49/SF]</div>
<div class="t blue" style="left:1020px;top:983.6px">Direct Cap Rate</div>
<div class="t r" style="left:1225px;width:300px;top:983.6px;color:#444">10.00%</div>
<div class="t blue" style="left:1020px;top:1005.3px">Direct Cap Value</div>
<div class="t r" style="left:1225px;width:300px;top:1005.3px;color:#444">$3,651,000 [$60.85/SF]</div>
</body></html>
